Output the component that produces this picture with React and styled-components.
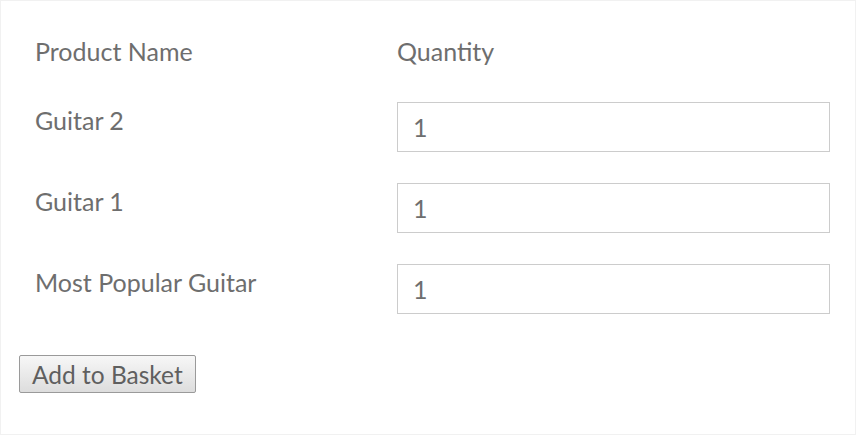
import React from "react";
import styled, { createGlobalStyle } from "styled-components";

const GlobalStyle = createGlobalStyle`
  html, body {
    margin: 0;
    padding: 0;
    background: #ffffff;
    font-family: Lato, "Open Sans", sans-serif;
  }
`;

const Page = styled.div`
  box-sizing: border-box;
  width: 856px;
  height: 435px;
  border: 1px solid #f1f1f1;
  padding: 31px 18px 0 18px;
  display: flex;
  flex-direction: column;
  align-items: flex-start;
`;

const Basket = styled.div`
  display: grid;
  grid-template-columns: 362px 433px;
  grid-auto-rows: 50px;
  grid-template-rows: 39px;
  row-gap: 31px;
  padding-left: 16px;
`;

const HeaderCell = styled.div`
  font-size: 25px;
  line-height: 39px;
  color: #6e6e6e;
`;

const NameCell = styled.div`
  font-size: 25px;
  line-height: 30px;
  padding-top: 3px;
  color: #6e6e6e;
`;

const QuantityInput = styled.input`
  box-sizing: border-box;
  width: 433px;
  height: 50px;
  border: 1px solid #cccccc;
  padding: 0 15px;
  font-family: Lato, "Open Sans", sans-serif;
  font-size: 25px;
  color: #6e6e6e;
  background: #ffffff;
  outline: none;
`;

const AddButton = styled.button`
  margin-top: 41px;
  height: 38px;
  padding: 2px 12px 0;
  font-family: Lato, "Open Sans", sans-serif;
  font-size: 24.5px;
  line-height: 34px;
  color: #5f5f5f;
  border: 1px solid #9a9a9a;
  border-radius: 2px;
  background: linear-gradient(#f7f7f7, #dddddd);
  cursor: pointer;
`;

const products = ["Guitar 2", "Guitar 1", "Most Popular Guitar"];

export default function App() {
  return (
    <>
      <GlobalStyle />
      <Page>
        <Basket>
          <HeaderCell>Product Name</HeaderCell>
          <HeaderCell>Quantity</HeaderCell>
          {products.map(name => (
            <React.Fragment key={name}>
              <NameCell>{name}</NameCell>
              <QuantityInput type="text" defaultValue="1" />
            </React.Fragment>
          ))}
        </Basket>
        <AddButton type="button">Add to Basket</AddButton>
      </Page>
    </>
  );
}
